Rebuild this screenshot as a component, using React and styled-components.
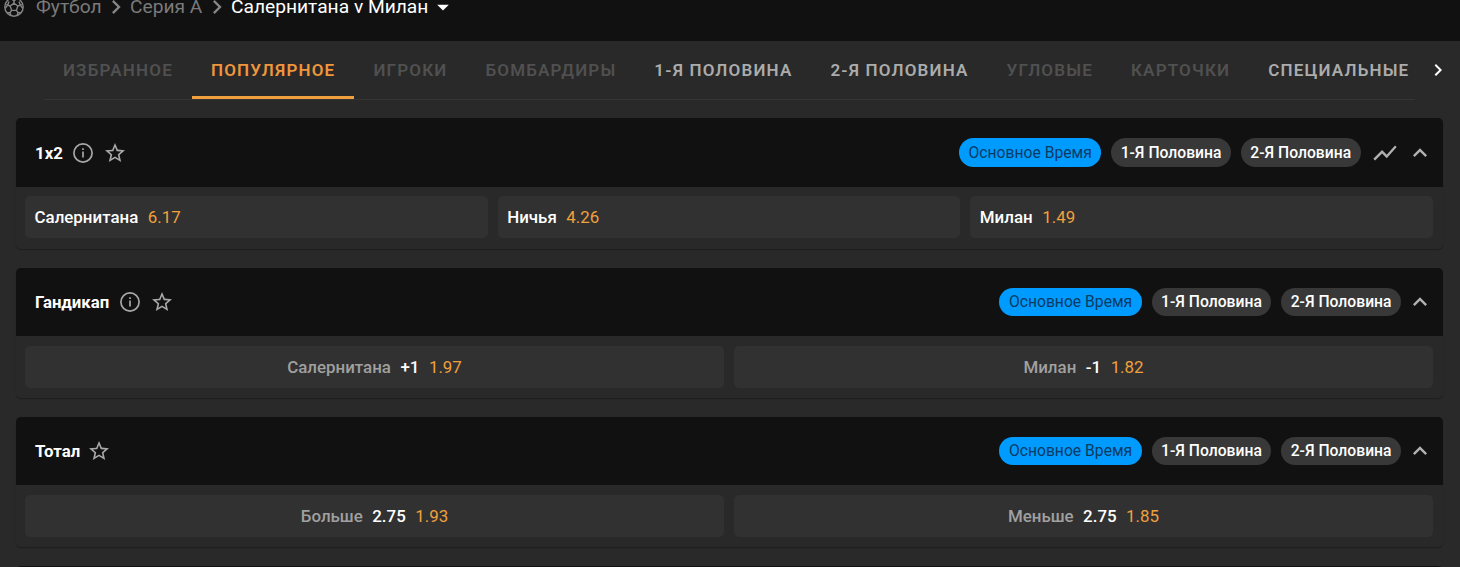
import React from 'react';
import styled, { createGlobalStyle } from 'styled-components';
import {
  MdArrowDropDown,
  MdChevronRight,
  MdExpandLess,
  MdShowChart,
  MdStarBorder,
} from 'react-icons/md';

const tabs = [
  { label: 'Избранное', state: 'disabled' },
  { label: 'Популярное', state: 'active' },
  { label: 'Игроки', state: 'disabled' },
  { label: 'Бомбардиры', state: 'disabled' },
  { label: '1-я половина' },
  { label: '2-я половина' },
  { label: 'Угловые', state: 'disabled' },
  { label: 'Карточки', state: 'disabled' },
  { label: 'Специальные' },
];

const periods = ['Основное Время', '1-Я Половина', '2-Я Половина'];

const markets = [
  {
    title: '1x2',
    info: true,
    chart: true,
    outcomes: [
      { name: 'Салернитана', price: '6.17' },
      { name: 'Ничья', price: '4.26' },
      { name: 'Милан', price: '1.49' },
    ],
  },
  {
    title: 'Гандикап',
    info: true,
    outcomes: [
      { name: 'Салернитана', line: '+1', price: '1.97' },
      { name: 'Милан', line: '-1', price: '1.82' },
    ],
  },
  {
    title: 'Тотал',
    outcomes: [
      { name: 'Больше', line: '2.75', price: '1.93' },
      { name: 'Меньше', line: '2.75', price: '1.85' },
    ],
  },
];

const BallIcon = () => (
  <svg width="24" height="24" viewBox="0 0 24 24" fill="none" stroke="currentColor" strokeWidth="1.4">
    <circle cx="12" cy="12" r="9.2" />
    <path d="M12 8.2l3.8 2.8-1.4 4.4H9.6L8.2 11z" />
    <path d="M12 8.2V5.6M15.8 11l2.5-.9M14.4 15.4l1.6 2.3M9.6 15.4L8 17.7M8.2 11l-2.5-.9" />
    <path d="M8.6 3.6L12 5.6l3.4-2M20.9 9.6l-2.6.5-1.3-3.6M18.9 17.8l-2.9-.1-1 3M9 20.7l-1-3-2.9.1M3.1 9.6l2.6.5L7 6.5M18.3 10.1l2.4 3.3M5.7 10.1l-2.4 3.3" />
  </svg>
);

const InfoIcon = () => (
  <svg width="24" height="24" viewBox="0 0 24 24" fill="none" stroke="currentColor">
    <circle cx="12" cy="12" r="9.1" strokeWidth="1.7" />
    <path d="M12 10.6v6M12 7.2v1.8" strokeWidth="1.7" />
  </svg>
);

const Market = ({ title, info, chart, outcomes }) => (
  <StCard>
    <StCardHeader>
      <StCardTitle>{title}</StCardTitle>
      <StTitleIcons $wide={info}>
        {info && <InfoIcon />}
        <MdStarBorder size={24} />
      </StTitleIcons>
      <StPeriods>
        {periods.map((period, i) => (
          <StPeriod key={period} $active={i === 0}>
            {period}
          </StPeriod>
        ))}
      </StPeriods>
      <StHeaderIcons $wide={chart}>
        {chart && <MdShowChart size={28} />}
        <MdExpandLess size={28} />
      </StHeaderIcons>
    </StCardHeader>
    <StOutcomes>
      {outcomes.map(({ name, line, price }) => (
        <StOutcome key={name} $centered={!!line}>
          <StName $muted={!!line}>{name}</StName>
          {line && <StName>{line}</StName>}
          <StPrice>{price}</StPrice>
        </StOutcome>
      ))}
    </StOutcomes>
  </StCard>
);

const App = () => {
  return (
    <StPage>
      <GlobalStyle />
      <StBreadcrumbs>
        <StCrumbList>
          <BallIcon />
          <StCrumb $width="66px">Футбол</StCrumb>
          <StSeparator />
          <StCrumb $width="73px">Серия А</StCrumb>
          <StSeparator />
          <StCrumb $current $width="198px">
            Салернитана v Милан
          </StCrumb>
          <StDropIcon />
        </StCrumbList>
      </StBreadcrumbs>
      <StTabBar>
        <StTabs>
          {tabs.map(({ label, state }) => (
            <StTab key={label} $state={state}>
              {label}
            </StTab>
          ))}
        </StTabs>
        <StNext>
          <MdChevronRight size={24} />
        </StNext>
      </StTabBar>
      <StMarkets>
        {markets.map((market) => (
          <Market key={market.title} {...market} />
        ))}
        <StCard>
          <StCardHeader />
        </StCard>
      </StMarkets>
    </StPage>
  );
};

export default App;

const GlobalStyle = createGlobalStyle`
  body {
    margin: 0;
    background: #292929;
    overflow: hidden;
  }
  * {
    box-sizing: border-box;
  }
  svg {
    display: block;
    flex-shrink: 0;
  }
`;

const StPage = styled.main`
  height: 567px;
  display: flex;
  flex-direction: column;
  overflow: hidden;
  background: #292929;
  color: #fff;
  font-family: Roboto, sans-serif;
  font-size: 16.9px;
  font-weight: 500;
  white-space: nowrap;
`;

const StBreadcrumbs = styled.nav`
  flex: 0 0 41px;
  background: #111;
`;

/* the row is scrolled half way under the top edge */
const StCrumbList = styled.div`
  height: 28px;
  margin-top: -7.5px;
  display: flex;
  align-items: center;
  padding: 0 0 0 2px;
  color: #858585;
`;

const StCrumb = styled.span`
  width: ${(props) => props.$width};
  flex-shrink: 0;
  font-size: 19.2px;
  line-height: 13px;
  font-weight: 400;
  color: ${(props) => (props.$current ? '#fff' : '#7a7a7a')};
  &:nth-of-type(1) {
    margin-left: 10px;
  }
`;

const StSeparator = styled(MdChevronRight)`
  width: 28px;
  height: 28px;
`;

const StDropIcon = styled(MdArrowDropDown)`
  width: 28px;
  height: 28px;
  color: #fff;
`;

const StTabBar = styled.div`
  flex: 0 0 57.6px;
  display: flex;
  padding-left: 44px;
`;

const StTabs = styled.div`
  width: 1371px;
  display: flex;
  border-bottom: 1px solid #353535;
`;

const StTab = styled.div`
  flex-shrink: 0;
  height: 57.6px;
  padding: 0 19px;
  line-height: 58px;
  font-size: 17px;
  font-weight: 600;
  letter-spacing: 1.18px;
  text-transform: uppercase;
  color: ${({ $state }) =>
    $state === 'active' ? '#f0963c' : $state === 'disabled' ? '#505050' : '#acacac'};
  box-shadow: ${({ $state }) => ($state === 'active' ? 'inset 0 -3px #f0a03c' : 'none')};
`;

const StNext = styled.div`
  display: flex;
  align-items: center;
  padding: 0 0 1px 11px;
`;

const StMarkets = styled.div`
  display: flex;
  flex-direction: column;
  gap: 19px;
  padding: 18.9px 17px 0 16px;
`;

const StCard = styled.section`
  flex: 0 0 130.2px;
  border-radius: 5px;
  overflow: hidden;
  box-shadow: 0 1px 1px #1f1f1f;
  background: #292929;
`;

const StCardHeader = styled.header`
  height: 68.4px;
  display: flex;
  align-items: center;
  padding: 0 9px 0 19px;
  background: #111;
`;

const StCardTitle = styled.h2`
  margin: 0;
  font-size: 16.8px;
  font-weight: 700;
`;

const StTitleIcons = styled.div`
  display: flex;
  gap: 8px;
  margin-left: ${(props) => (props.$wide ? '8.6px' : '7px')};
  color: #a8a8a8;
`;

const StPeriods = styled.div`
  display: flex;
  gap: 9.8px;
  margin-left: auto;
`;

const StPeriod = styled.button`
  height: 28.6px;
  padding: 0 9.5px 1px;
  border: 0;
  border-radius: 15px;
  font: inherit;
  font-size: 15.7px;
  font-weight: ${(props) => (props.$active ? 400 : 500)};
  background: ${(props) => (props.$active ? '#009bff' : '#383838')};
  color: ${(props) => (props.$active ? '#0b3a63' : '#fff')};
`;

const StHeaderIcons = styled.div`
  display: flex;
  gap: 7px;
  margin-left: ${(props) => (props.$wide ? '10.4px' : '5px')};
  color: #b0b0b0;
`;

const StOutcomes = styled.div`
  display: flex;
  gap: 10px;
  padding: 9.6px 10px 10px 9px;
`;

const StOutcome = styled.div`
  flex: 1 1 0;
  height: 42px;
  display: flex;
  align-items: center;
  justify-content: ${(props) => (props.$centered ? 'center' : 'flex-start')};
  gap: 9.5px;
  padding: 0 9.5px;
  border-radius: 5px;
  background: #313131;
`;

const StName = styled.span`
  color: ${(props) => (props.$muted ? '#a0a0a0' : '#fff')};
`;

const StPrice = styled.span`
  font-weight: 400;
  color: #f0a03c;
`;
